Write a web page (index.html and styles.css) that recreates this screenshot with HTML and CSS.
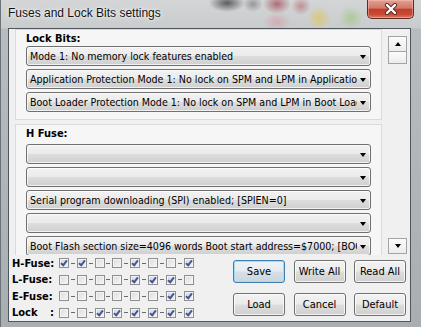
FILE: index.html
```html
<!DOCTYPE html>
<html lang="en">
<head>
  <meta charset="UTF-8">
  <meta name="viewport" content="width=device-width, initial-scale=1.0">
  <title>Fuses and Lock Bits settings</title>
  <link rel="stylesheet" href="styles.css">
</head>
<body>
  <div class="window">
    <div class="titlebar">
      <span class="title">Fuses and Lock Bits settings</span>
      <div class="close">
        <svg width="14" height="12" viewBox="0 0 14 12">
          <path d="M3 2 L11 10 M11 2 L3 10" stroke="#5a2a22" stroke-width="4.2" stroke-linecap="round"/>
          <path d="M3 2 L11 10 M11 2 L3 10" stroke="#fff" stroke-width="2.4" stroke-linecap="round"/>
        </svg>
      </div>
    </div>

    <div class="client">
      <div class="scrollbox">
        <div class="panels">
          <section class="group">
            <h2>Lock Bits:</h2>
            <div class="combo"><span class="val">Mode 1: No memory lock features enabled</span><span class="arrow"></span></div>
            <div class="combo"><span class="val">Application Protection Mode 1: No lock on SPM and LPM in Application Section</span><span class="arrow"></span></div>
            <div class="combo"><span class="val">Boot Loader Protection Mode 1: No lock on SPM and LPM in Boot Loader Section</span><span class="arrow"></span></div>
          </section>

          <section class="group fuse">
            <h2>H Fuse:</h2>
            <div class="combo"><span class="val"></span><span class="arrow"></span></div>
            <div class="combo"><span class="val"></span><span class="arrow"></span></div>
            <div class="combo"><span class="val">Serial program downloading (SPI) enabled; [SPIEN=0]</span><span class="arrow"></span></div>
            <div class="combo"><span class="val"></span><span class="arrow"></span></div>
            <div class="combo"><span class="val">Boot Flash section size=4096 words Boot start address=$7000; [BOOTSZ=00]</span><span class="arrow"></span></div>
            <div class="combo"><span class="val"></span><span class="arrow"></span></div>
          </section>
        </div>

        <div class="vscroll">
          <div class="sb-btn"><span class="tri up"></span></div>
          <div class="sb-thumb"></div>
          <div class="sb-track"></div>
          <div class="sb-btn"><span class="tri down"></span></div>
        </div>
      </div>

      <div class="bottom">
        <div class="bits">
          <div class="bit-row">
            <span class="bit-label">H-Fuse:</span>
            <span class="cb on"></span><span class="dash"></span><span class="cb on"></span><span class="dash"></span><span class="cb"></span><span class="dash"></span><span class="cb"></span><span class="dash"></span><span class="cb on"></span><span class="dash"></span><span class="cb"></span><span class="dash"></span><span class="cb"></span><span class="dash"></span><span class="cb on"></span>
          </div>
          <div class="bit-row">
            <span class="bit-label">L-Fuse:</span>
            <span class="cb"></span><span class="dash"></span><span class="cb"></span><span class="dash"></span><span class="cb"></span><span class="dash"></span><span class="cb"></span><span class="dash"></span><span class="cb on"></span><span class="dash"></span><span class="cb on"></span><span class="dash"></span><span class="cb on"></span><span class="dash"></span><span class="cb"></span>
          </div>
          <div class="bit-row">
            <span class="bit-label">E-Fuse:</span>
            <span class="cb"></span><span class="dash"></span><span class="cb"></span><span class="dash"></span><span class="cb"></span><span class="dash"></span><span class="cb"></span><span class="dash"></span><span class="cb"></span><span class="dash"></span><span class="cb"></span><span class="dash"></span><span class="cb on"></span><span class="dash"></span><span class="cb on"></span>
          </div>
          <div class="bit-row">
            <span class="bit-label split"><span>Lock</span><span>:</span></span>
            <span class="cb"></span><span class="dash"></span><span class="cb"></span><span class="dash"></span><span class="cb on"></span><span class="dash"></span><span class="cb on"></span><span class="dash"></span><span class="cb on"></span><span class="dash"></span><span class="cb on"></span><span class="dash"></span><span class="cb on"></span><span class="dash"></span><span class="cb on"></span>
          </div>
        </div>

        <div class="buttons">
          <button class="default">Save</button>
          <button>Write All</button>
          <button>Read All</button>
          <button>Load</button>
          <button>Cancel</button>
          <button>Default</button>
        </div>
      </div>
    </div>
  </div>
</body>
</html>
```

FILE: styles.css
```css
:root {
  --ui-font: 'DejaVu Sans Condensed', 'DejaVu Sans', sans-serif;
  --title-font: 'Liberation Sans', Arial, sans-serif;
  --face: #f0f0f0;
  --border: #707070;
}

body {
  margin: 0;
  width: 421px;
  height: 327px;
  overflow: hidden;
  font-family: var(--ui-font);
  font-stretch: condensed;
  font-size: 10.6px;
  color: #000;
}

/* glass frame */
.window {
  width: 421px;
  height: 327px;
  box-sizing: border-box;
  display: flex;
  flex-direction: column;
  border-left: 1px solid #6d7277;
  background:
    radial-gradient(ellipse 18px 9px at 226px 3px, rgba(50, 50, 55, 0.75), transparent),
    radial-gradient(ellipse 10px 8px at 252px 4px, rgba(90, 90, 95, 0.5), transparent),
    radial-gradient(ellipse 14px 10px at 276px 4px, rgba(150, 40, 55, 0.6), transparent),
    radial-gradient(ellipse 10px 9px at 300px 6px, rgba(170, 60, 70, 0.45), transparent),
    radial-gradient(ellipse 14px 10px at 276px 22px, rgba(215, 140, 150, 0.5), transparent),
    radial-gradient(ellipse 12px 12px at 318px 18px, rgba(225, 195, 80, 0.65), transparent),
    radial-gradient(ellipse 12px 12px at 350px 18px, rgba(150, 195, 110, 0.55), transparent),
    linear-gradient(to bottom, #d3d5d6 0, #c9cccd 28px, #b7bcc0 29px, #a9aeb2 100%);
}

.titlebar {
  height: 28px;
  display: flex;
  align-items: flex-start;
  flex-shrink: 0;
}

.title {
  padding: 6px 0 0 7px;
  font-family: var(--title-font);
  font-stretch: normal;
  font-size: 12px;
  color: #111;
  text-shadow: 0 0 6px rgba(255, 255, 255, 0.95), 0 0 2px rgba(255, 255, 255, 0.9);
}

.close {
  margin-left: auto;
  margin-right: 7px;
  width: 47px;
  height: 19px;
  box-sizing: border-box;
  border: 1px solid #5b2c28;
  border-top: none;
  border-radius: 0 0 5px 5px;
  background: linear-gradient(to bottom, #e1a192 0%, #d2776a 45%, #c23d2a 52%, #c84a34 80%, #de7c63 100%);
  box-shadow: inset 0 0 0 1px rgba(255, 200, 190, 0.45);
  display: flex;
  align-items: center;
  justify-content: center;
}

/* client area */
.client {
  flex: 1;
  margin: 0 10px 5px 7px;
  border: 1px solid #50565c;
  background: var(--face);
  display: flex;
  flex-direction: column;
}

.scrollbox {
  height: 226px;
  display: flex;
  overflow: hidden;
  flex-shrink: 0;
}

.panels {
  width: 367px;
  margin-left: 6px;
}

.group {
  border: 1px solid #dadada;
  background: #f6f6f6;
  padding: 2px 10px 4px;
}

.group + .group {
  margin-top: 4px;
}

.group h2 {
  font-size: 11px;
  line-height: 13px;
  font-weight: bold;
  margin: 0 0 1px;
}

.group.fuse h2 {
  margin-bottom: 4px;
}

.combo {
  height: 20px;
  box-sizing: border-box;
  margin-bottom: 3px;
  border: 1px solid var(--border);
  border-radius: 3px;
  background: linear-gradient(to bottom, #f2f2f2 0%, #ebebeb 48%, #dddddd 52%, #cfcfcf 100%);
  box-shadow: inset 0 0 0 1px rgba(255, 255, 255, 0.7);
  display: flex;
  align-items: center;
}

.combo .val {
  flex: 1;
  min-width: 0;
  overflow: hidden;
  white-space: nowrap;
  padding-left: 3px;
}

.combo .arrow {
  width: 0;
  height: 0;
  margin: 1px 4px 0 3px;
  border-left: 3.5px solid transparent;
  border-right: 3.5px solid transparent;
  border-top: 4px solid #000;
}

/* scrollbar */
.vscroll {
  width: 19px;
  margin: 7px 0 1px 6px;
  display: flex;
  flex-direction: column;
}

.sb-btn,
.sb-thumb {
  box-sizing: border-box;
  border: 1px solid #a4a4a4;
  background: linear-gradient(to bottom, #fbfbfb, #ececec);
}

.sb-btn {
  height: 16px;
  display: flex;
  align-items: center;
  justify-content: center;
}

.sb-thumb {
  height: 13px;
  margin-top: -1px;
}

.sb-track {
  flex: 1;
}

.tri {
  width: 0;
  height: 0;
  border-left: 3.5px solid transparent;
  border-right: 3.5px solid transparent;
}

.tri.up {
  border-bottom: 4px solid #000;
}

.tri.down {
  border-top: 4px solid #000;
}

/* bit rows and buttons */
.bottom {
  flex: 1;
  display: flex;
  justify-content: space-between;
}

.bits {
  padding-left: 3px;
}

.bit-row {
  height: 16.5px;
  display: flex;
  align-items: center;
}

.bit-label {
  width: 44px;
  margin-right: 3px;
  font-size: 11px;
  font-weight: bold;
  white-space: nowrap;
}

.bit-label.split {
  display: flex;
  justify-content: space-between;
  padding-right: 2px;
  width: 42px;
}

.cb {
  width: 10px;
  height: 10px;
  box-sizing: border-box;
  border: 1px solid #8f8f8f;
  background: linear-gradient(135deg, #dcdcdc, #f6f6f6);
  box-shadow: inset 0 0 0 1px #f4f4f4;
  display: flex;
  align-items: center;
  justify-content: center;
}

.cb.on {
  background: linear-gradient(135deg, #cfd8e6, #eef2f8);
}

.cb.on::after {
  content: '';
  width: 2px;
  height: 5px;
  margin-top: -1px;
  border-right: 2px solid #45578e;
  border-bottom: 2px solid #45578e;
  transform: rotate(38deg);
}

.dash {
  width: 7.8px;
  display: flex;
  justify-content: center;
}

.dash::before {
  content: '';
  width: 4px;
  height: 1px;
  background: #6a6a6a;
}

.buttons {
  display: grid;
  grid-template-columns: repeat(3, 52px);
  grid-auto-rows: 23px;
  column-gap: 8.5px;
  row-gap: 10px;
  margin: 5px 4px 0 0;
}

button {
  font-family: var(--ui-font);
  font-stretch: condensed;
  font-size: 11px;
  color: #000;
  padding: 0;
  border: 1px solid var(--border);
  border-radius: 3px;
  background: linear-gradient(to bottom, #f2f2f2 0%, #ebebeb 48%, #dddddd 52%, #cfcfcf 100%);
  box-shadow: inset 0 0 0 1px rgba(255, 255, 255, 0.75);
}

button.default {
  border-color: #3c7fb1;
  background: linear-gradient(to bottom, #eef3f6 0%, #e6ecf0 48%, #d6e0e6 52%, #c9d6de 100%);
  box-shadow: inset 0 0 0 1px #9fdcf5;
}
```
